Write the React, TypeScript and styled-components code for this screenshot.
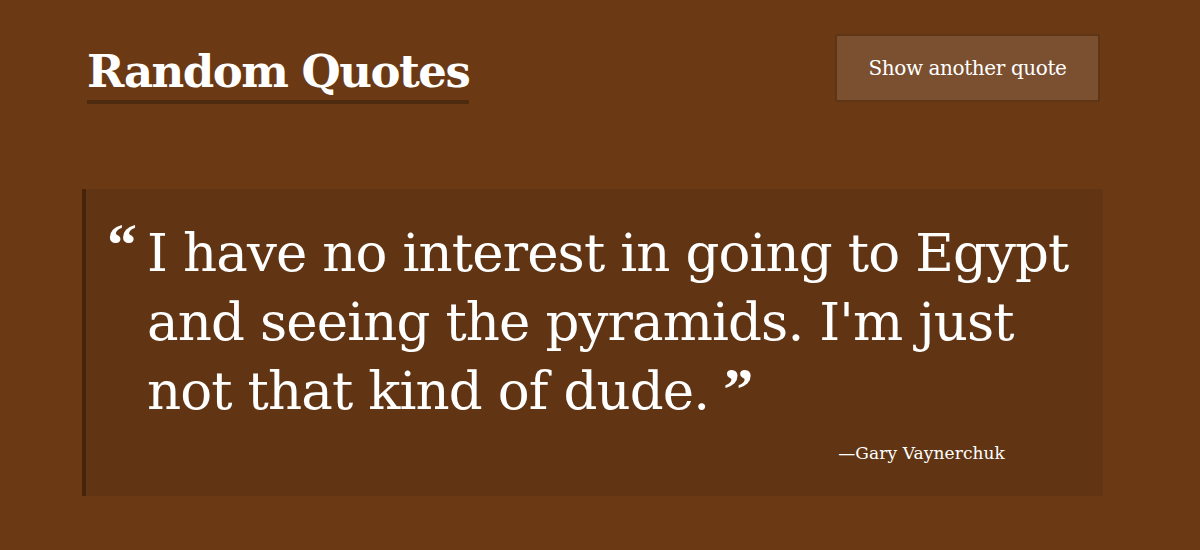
import React from "react";
import styled, { createGlobalStyle } from "styled-components";

const Global = createGlobalStyle`
  html, body { margin: 0; padding: 0; background: #6b3a15; }
  body { font-family: "DejaVu Serif", "Liberation Serif", serif; color: #fff; }
`;

const Page = styled.div`
  width: 1021px;
  margin: 0 0 0 82px;
  padding-top: 34px;
`;

const Header = styled.header`
  display: flex;
  justify-content: space-between;
  align-items: flex-start;
  padding: 0 3px 0 5px;
`;

const Title = styled.h1`
  margin: 10px 0 0;
  font-size: 45px;
  font-weight: 700;
  line-height: 56px;
  letter-spacing: -1.5px;
  border-bottom: 4px solid #4e2a0f;
  color: #fff;
`;

const Button = styled.button`
  height: 68px;
  width: 265px;
  background: #7b5030;
  border: 2px solid #5e3516;
  border-radius: 3px;
  color: #fff;
  font-family: "DejaVu Serif", "Liberation Serif", serif;
  font-size: 20px;
  letter-spacing: -0.4px;
  cursor: pointer;
`;

const QuoteBox = styled.blockquote`
  margin: 85px 0 0;
  background: #613513;
  border-left: 4px solid #452409;
  border-radius: 0 3px 3px 0;
  padding: 29px 10px 33px 21px;
  display: flex;
  flex-direction: column;
`;

const QuoteRow = styled.div`
  display: flex;
  align-items: flex-start;
`;

const OpenMark = styled.span`
  font-family: "Liberation Serif", serif;
  font-size: 60px;
  font-weight: 700;
  line-height: 1;
  width: 40px;
  flex: none;
  margin-top: -3px;
`;

const QuoteText = styled.p`
  margin: 0;
  font-size: 53px;
  line-height: 69px;
  letter-spacing: -0.9px;
  max-width: 940px;
`;

const CloseMark = styled.span`
  font-family: "Liberation Serif", serif;
  font-weight: 700;
  font-size: 60px;
  line-height: 0;
  margin-left: 14px;
  vertical-align: baseline;
`;

const Author = styled.cite`
  align-self: flex-end;
  margin: 18px 88px 0 0;
  font-style: normal;
  font-size: 17px;
  line-height: 20px;
  letter-spacing: 0.1px;
`;

export default function App() {
  return (
    <>
      <Global />
      <Page>
        <Header>
          <Title>Random Quotes</Title>
          <Button>Show another quote</Button>
        </Header>
        <QuoteBox>
          <QuoteRow>
            <OpenMark>“</OpenMark>
            <QuoteText>
              I have no interest in going to Egypt and seeing the pyramids. I'm just not that kind of dude.
              <CloseMark>”</CloseMark>
            </QuoteText>
          </QuoteRow>
          <Author>—Gary Vaynerchuk</Author>
        </QuoteBox>
      </Page>
    </>
  );
}
